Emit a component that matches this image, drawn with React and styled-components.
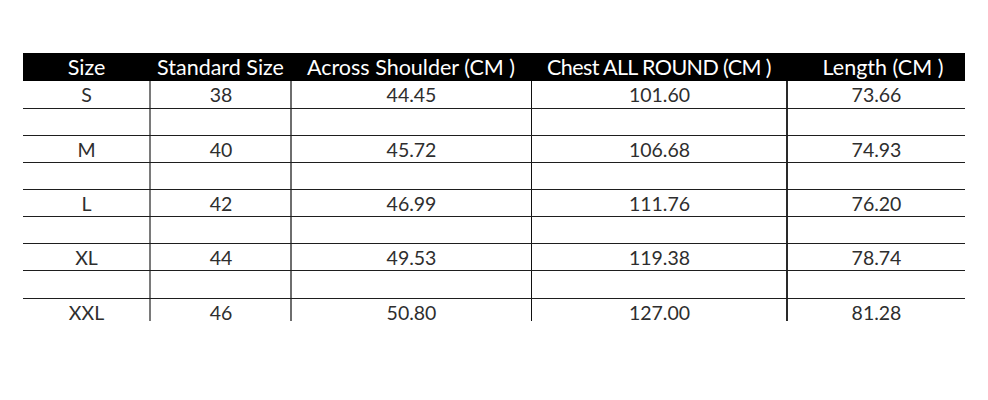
import React from "react";
import styled, { createGlobalStyle } from "styled-components";

const Global = createGlobalStyle`
  html, body { margin: 0; padding: 0; background: #ffffff; }
  body { font-family: Lato, "Open Sans", "Liberation Sans", sans-serif; }
`;

const Page = styled.div`
  width: 988px;
  height: 400px;
  padding: 53px 0 0 23px;
  box-sizing: border-box;
`;

const Chart = styled.div`
  width: 942px;
  height: 268px;
  overflow: hidden;
`;

const COLS = "127px 141px 240px 256px 178px";

const HeadRow = styled.div`
  display: grid;
  grid-template-columns: ${COLS};
  height: 28px;
  background: #000000;
  color: #ffffff;
  font-size: 21.5px;
  line-height: 29px;
`;

const HeadCell = styled.div`
  text-align: center;
  white-space: nowrap;
  padding-left: ${(p) => p.$shift || 0}px;
  letter-spacing: ${(p) => p.$tight || 0}px;
`;

const Row = styled.div`
  display: grid;
  grid-template-columns: ${COLS};
  height: ${(p) => p.$h || 27}px;
  box-sizing: border-box;
  border-bottom: 1px solid #1e1e1e;
  color: #2e2e2e;
  font-size: 19.5px;
`;

const Cell = styled.div`
  display: flex;
  align-items: center;
  justify-content: center;
  box-sizing: border-box;
  border-left: ${(p) => (p.$line ? `${p.$lw || 1}px solid ${p.$line}` : "none")};
  margin-left: ${(p) => (p.$line ? -(p.$lw || 1) + 1 : 0)}px;
`;

const lines = [null, ["#7a7a7a", 2], ["#6e6e6e", 2], ["#111111", 1], ["#2a2a2a", 2]];

const heads = ["Size", "Standard Size", "Across Shoulder (CM )", "Chest ALL ROUND (CM )", "Length (CM )"];

const data = [
  ["S", "38", "44.45", "101.60", "73.66"],
  ["M", "40", "45.72", "106.68", "74.93"],
  ["L", "42", "46.99", "111.76", "76.20"],
  ["XL", "44", "49.53", "119.38", "78.74"],
  ["XXL", "46", "50.80", "127.00", "81.28"],
];

function DataRow({ values, h }) {
  return (
    <Row $h={h}>
      {values.map((v, i) => (
        <Cell key={i} $line={lines[i] && lines[i][0]} $lw={lines[i] && lines[i][1]}>
          {v}
        </Cell>
      ))}
    </Row>
  );
}

export default function App() {
  const rows = [];
  data.forEach((r, i) => {
    rows.push(<DataRow key={`d${i}`} values={r} h={i === 0 ? 28 : 27} />);
    if (i < data.length - 1)
      rows.push(<DataRow key={`e${i}`} values={["", "", "", "", ""]} h={i === 3 ? 28 : 27} />);
  });
  return (
    <>
      <Global />
      <Page>
        <Chart>
          <HeadRow>
            {heads.map((h, i) => (
              <HeadCell key={i} $shift={i === 4 ? 14 : 0} $tight={i === 3 ? -0.6 : 0}>
                {h}
              </HeadCell>
            ))}
          </HeadRow>
          {rows}
        </Chart>
      </Page>
    </>
  );
}
